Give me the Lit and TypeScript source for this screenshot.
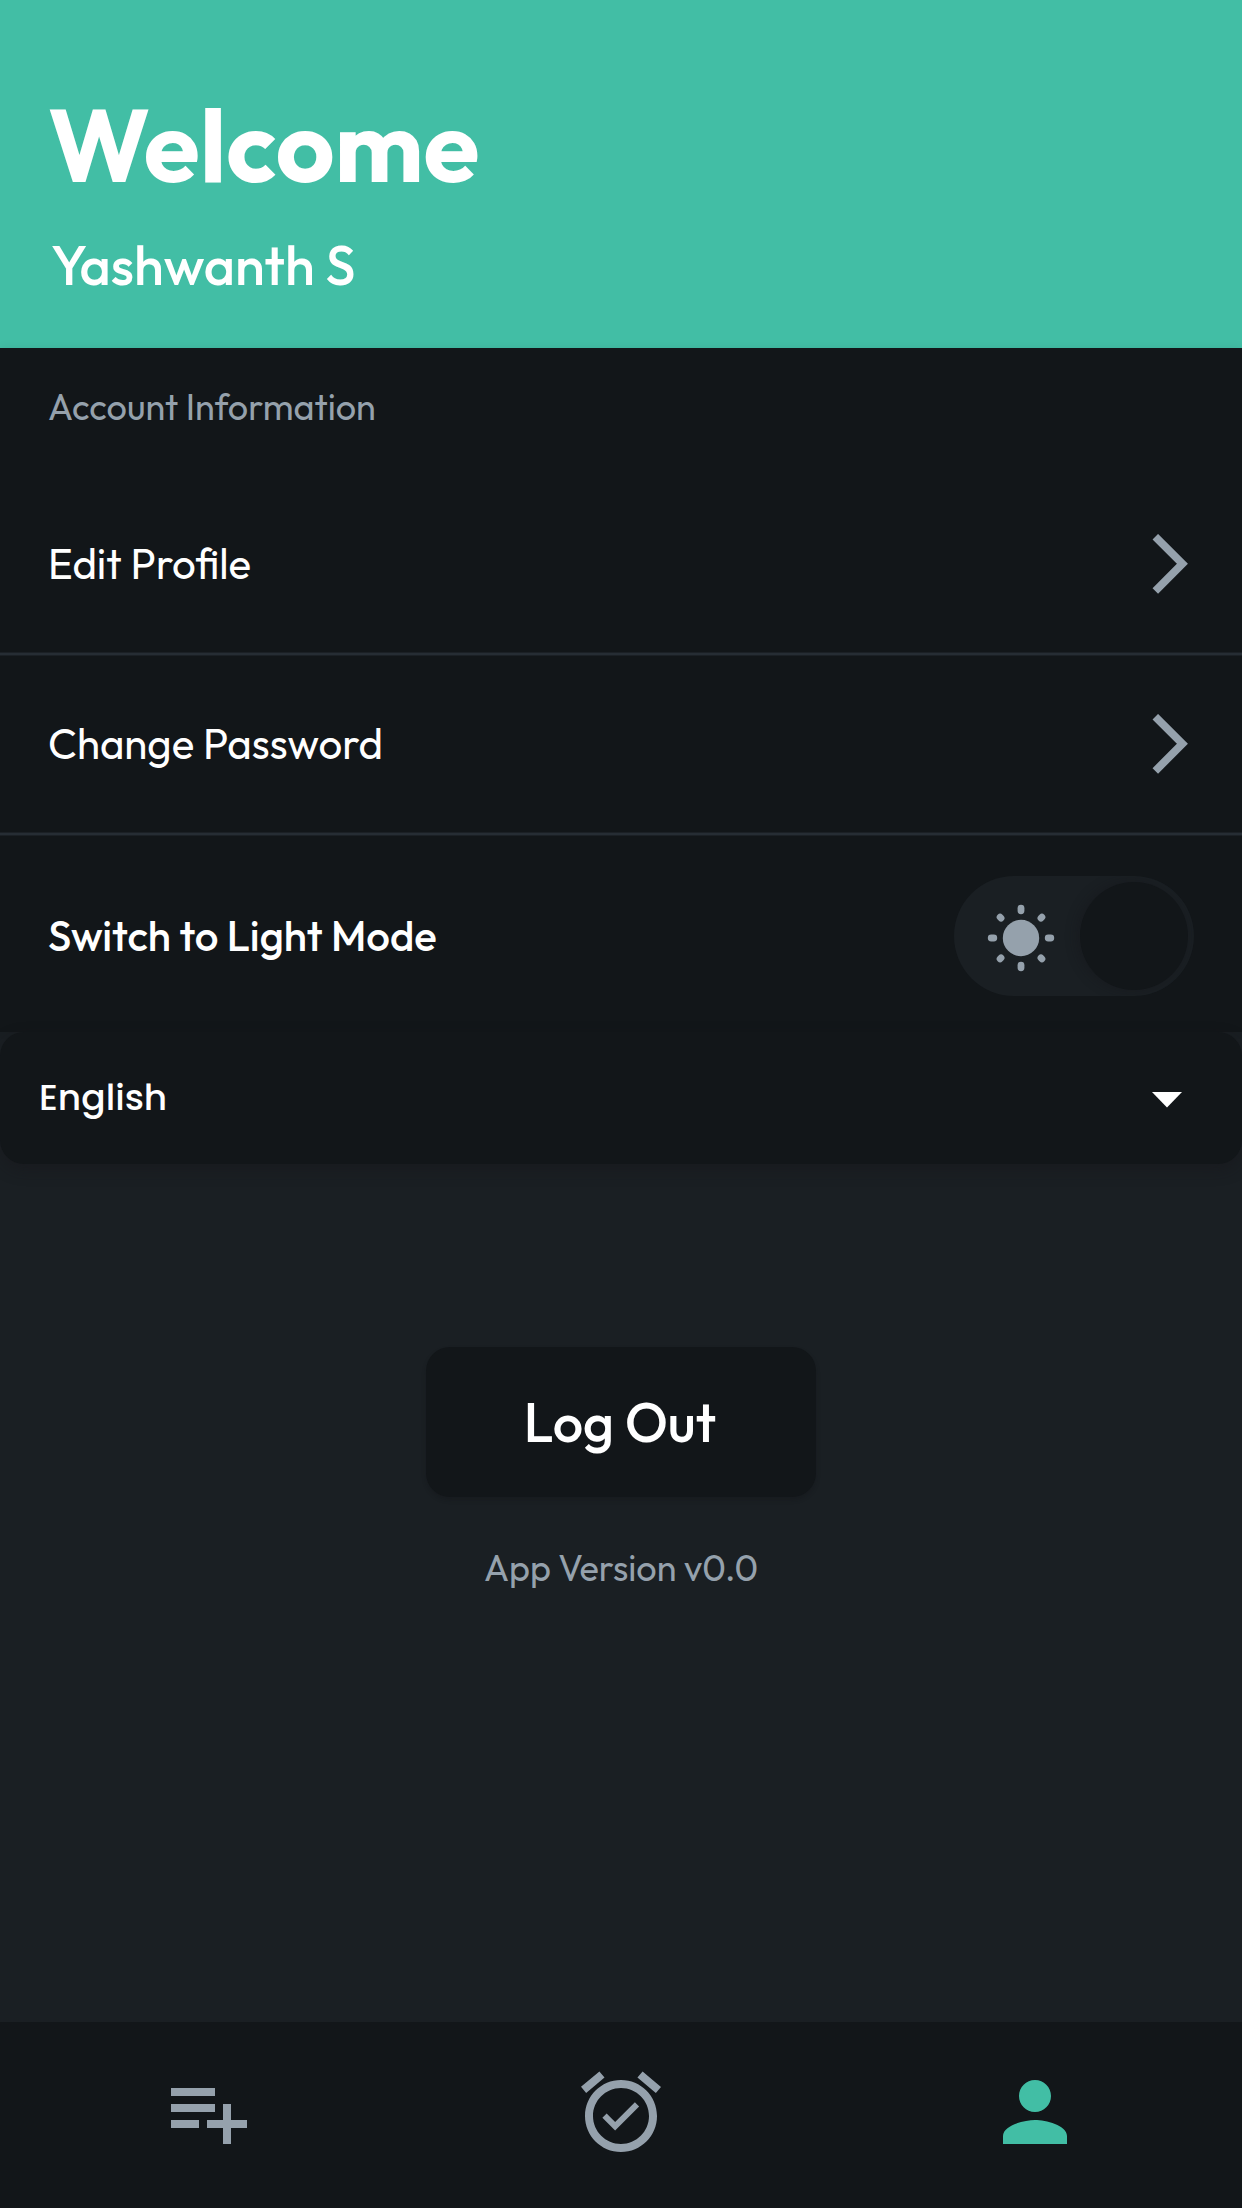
import { LitElement, html, css, svg } from "lit";
import { customElement } from "lit/decorators.js";

const straightRays = [0, 90, 180, 270];
const diagonalRays = [45, 135, 225, 315];

@customElement("app-root")
export class AppRoot extends LitElement {
  static styles = css`
    :host {
      display: flex;
      flex-direction: column;
      height: 2208px;
      background: #1a1f23;
      color: #fff;
      font-family: Outfit, Lato, sans-serif;
      overflow: hidden;
    }
    * { box-sizing: border-box; }
    h1, p { margin: 0; }
    svg { display: block; }
    span, h1, p { white-space: nowrap; }
    .header {
      height: 348px;
      padding: 85px 48px 0;
      background: #42bea5;
      flex: none;
    }
    .title { font-size: 102px; line-height: 120px; font-weight: 700; }
    .name { font-size: 54px; line-height: 64px; margin-top: 28px; padding-left: 3px; font-weight: 500; }
    .account {
      flex: none;
      height: 684px;
      background: #121619;
      box-shadow: 0 0 9px rgba(17, 20, 23, 0.08);
    }
    .caption { height: 128px; padding: 37px 48px 0; font-size: 36px; line-height: 44px; color: #95a1ac; }
    .row {
      height: 180px;
      padding: 0 54px 4px 48px;
      display: flex;
      align-items: center;
      justify-content: space-between;
      font-size: 42px;
      line-height: 50px;
      background: linear-gradient(#1b2025 1px, #262d34 1px, #262d34 3px, #1b2025 3px) bottom / 100% 4px no-repeat;
    }
    .row.mode { height: 196px; padding: 4px 48px 0; background: none; font-weight: 500; }
    .toggle {
      width: 240px;
      height: 120px;
      border-radius: 60px;
      background: #1a1f23;
      display: flex;
      align-items: center;
      justify-content: space-between;
      padding: 0 6px 0 33px;
      overflow: hidden;
    }
    .sun { margin-top: 3px; }
    .knob { width: 108px; height: 108px; border-radius: 50%; background: #121619; box-shadow: -3px 0 12px rgba(20, 20, 24, 0.4); }
    .select {
      flex: none;
      height: 132px;
      border-radius: 24px;
      background: #121619;
      box-shadow: 0 6px 15px rgba(22, 20, 26, 0.4);
      display: flex;
      align-items: center;
      justify-content: space-between;
      padding: 0 60px 0 39px;
      font-family: Poppins, Outfit, sans-serif;
      font-size: 36px;
      font-weight: 500;
    }
    .select span { padding-bottom: 2px; }
    .caret { margin-top: 3px; }
    .actions { flex: 1; display: flex; flex-direction: column; align-items: center; padding-top: 183px; }
    .logout {
      font: inherit;
      font-weight: 500;
      color: inherit;
      width: 390px;
      height: 150px;
      border: 0;
      padding: 0 2px 0 0;
      border-radius: 24px;
      background: #121619;
      box-shadow: 0 3px 4px rgba(17, 16, 20, 0.25);
      font-size: 54px;
    }
    .version { margin-top: 49px; font-size: 36px; line-height: 44px; color: #95a1ac; }
    .nav {
      flex: none;
      height: 186px;
      padding-top: 42px;
      background: #121619;
      display: grid;
      grid-template-columns: repeat(3, 1fr);
      justify-items: center;
      align-items: start;
      color: #95a1ac;
    }
    .active { color: #42bea5; }
  `;

  private chevron() {
    return svg`<svg width="36" height="60" viewBox="0 0 36 60"><path d="M3.3 2.7L30.4 29.8L3.3 56.9" fill="none" stroke="#95a1ac" stroke-width="7.8"/></svg>`;
  }

  render() {
    return html`
      <header class="header">
        <h1 class="title">Welcome</h1>
        <p class="name">Yashwanth S</p>
      </header>
      <section class="account">
        <p class="caption">Account Information</p>
        <div class="row"><span>Edit Profile</span>${this.chevron()}</div>
        <div class="row"><span>Change Password</span>${this.chevron()}</div>
        <div class="row mode">
          <span>Switch to Light Mode</span>
          <div class="toggle">
            <svg class="sun" width="68" height="68" viewBox="-34 -34 68 68" fill="#95a1ac">
              <circle r="18.2" />
              ${straightRays.map((a) => svg`<rect x="23.8" y="-3.4" width="9.4" height="6.8" rx="3.4" transform="rotate(${a})" />`)}
              ${diagonalRays.map((a) => svg`<rect x="24.8" y="-3.4" width="8.2" height="6.8" rx="3.4" transform="rotate(${a})" />`)}
            </svg>
            <div class="knob"></div>
          </div>
        </div>
      </section>
      <div class="select">
        <span>English</span>
        <svg class="caret" width="30" height="16" viewBox="0 0 30 16"><path d="M0 0H30L15 15.5Z" fill="#fff" /></svg>
      </div>
      <main class="actions">
        <button class="logout">Log Out</button>
        <p class="version">App Version v0.0</p>
      </main>
      <nav class="nav">
        <svg width="96" height="96" viewBox="0 0 24 24" fill="currentColor"><path d="M14 10H3v2h11v-2zm0-4H3v2h11V6zm4 8v-4h-2v4h-4v2h4v4h2v-4h4v-2h-4zM3 16h7v-2H3v2z" /></svg>
        <svg width="96" height="96" viewBox="0 0 24 24" fill="currentColor"><path d="M22 5.72l-4.6-3.86-1.29 1.53 4.6 3.86L22 5.72zM7.88 3.39L6.6 1.86 2 5.71l1.29 1.53 4.59-3.85zM12 4c-4.97 0-9 4.03-9 9s4.02 9 9 9c4.97 0 9-4.03 9-9s-4.03-9-9-9zm0 16c-3.87 0-7-3.13-7-7s3.13-7 7-7 7 3.13 7 7-3.13 7-7 7zm-1.46-5.47L8.41 12.4l-1.06 1.06 3.18 3.18 6-6-1.06-1.06-4.93 4.95z" /></svg>
        <svg class="active" width="96" height="96" viewBox="0 0 24 24" fill="currentColor"><path d="M12 12c2.21 0 4-1.79 4-4s-1.79-4-4-4-4 1.79-4 4 1.79 4 4 4zm0 2c-2.67 0-8 1.34-8 4v2h16v-2c0-2.66-5.33-4-8-4z" /></svg>
      </nav>
    `;
  }
}
